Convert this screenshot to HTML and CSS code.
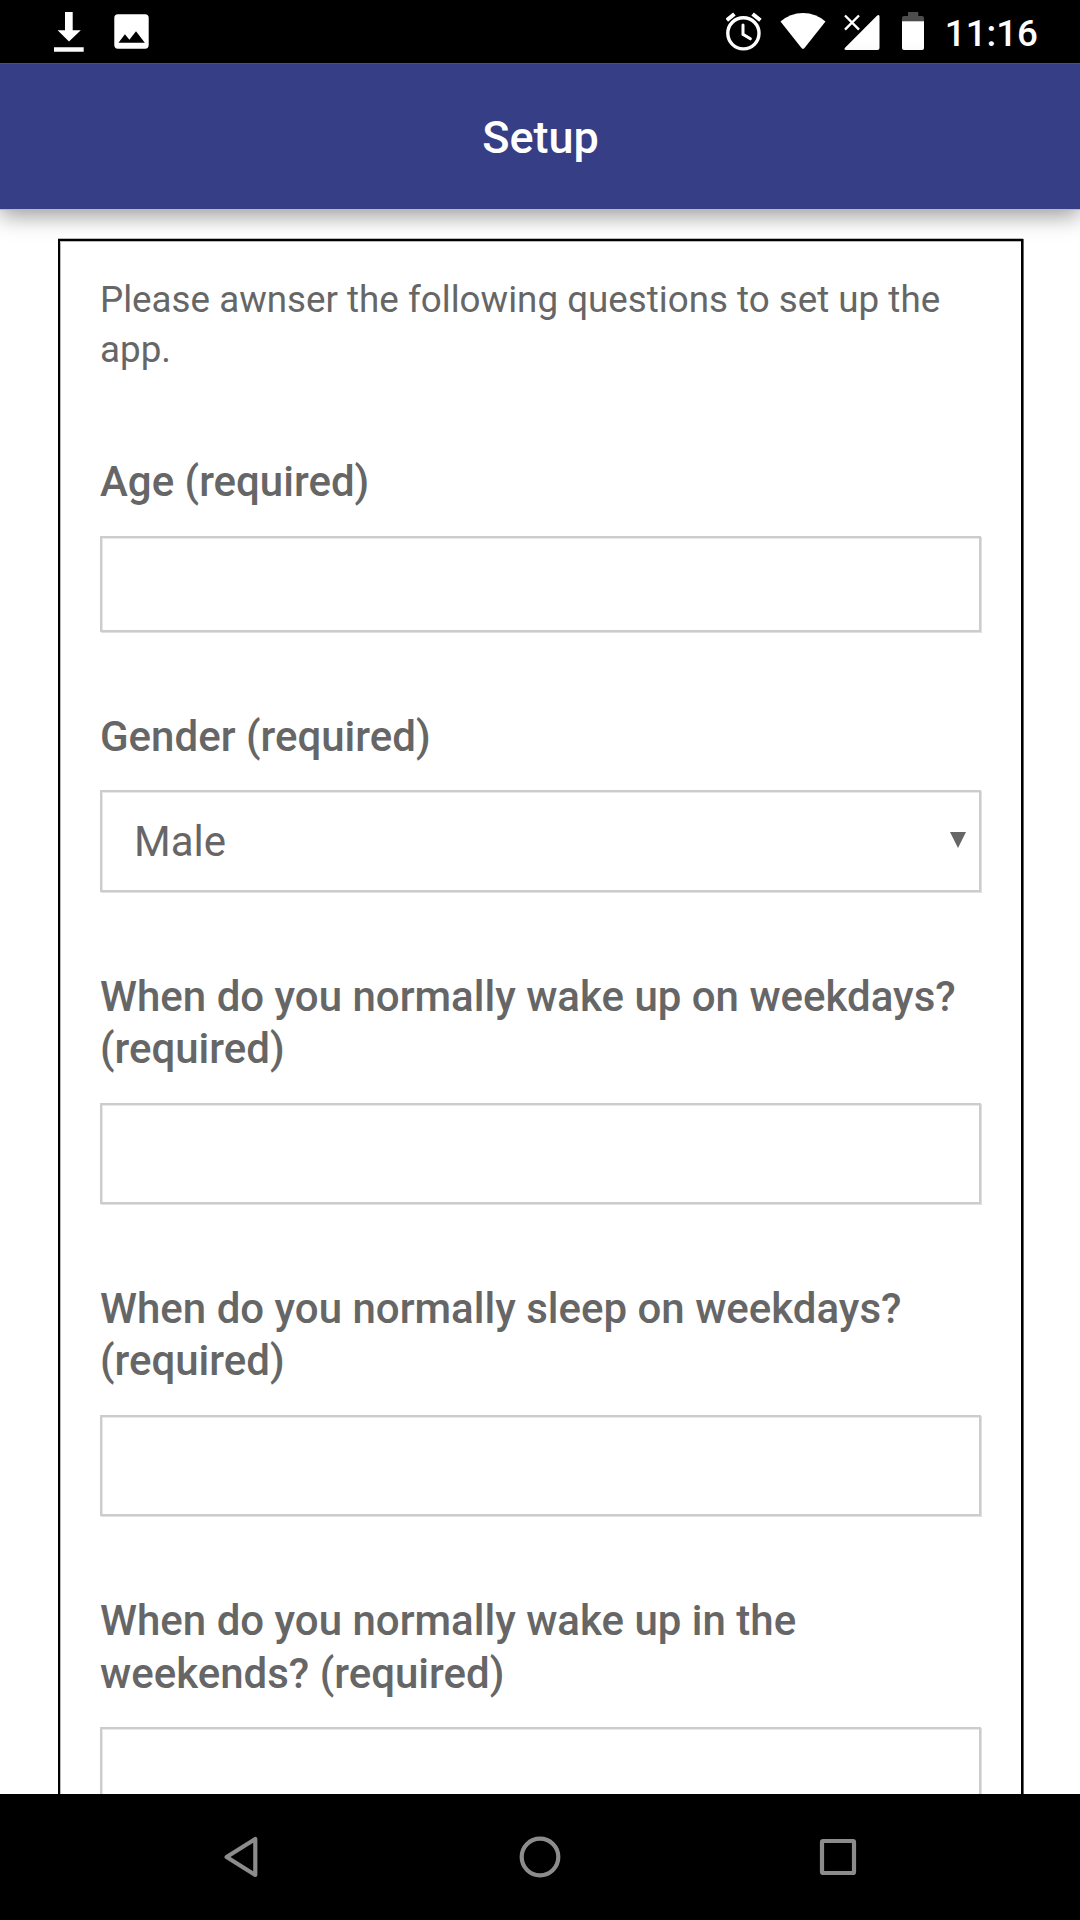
FILE: index.html
```html
<!DOCTYPE html>
<html lang="en">
<head>
<meta charset="utf-8">
<title>Setup</title>
<link rel="stylesheet" href="styles.css">
</head>
<body>
<div class="screen">
  <div class="status-bar">
    <div class="status-group">
      <svg class="icon" width="30" height="63" viewBox="54 0 30 63"><path d="M65 12h7.7v18.2h8.1L69 41.4 57.6 30.2H65zM54 47.3h29.7v4.4H54z"/></svg>
      <svg class="icon" width="35" height="63" viewBox="114 0 35 63"><path fill-rule="evenodd" d="M117.9 14.3h27.2a3.6 3.6 0 0 1 3.6 3.6v27.2a3.6 3.6 0 0 1-3.6 3.6h-27.2a3.6 3.6 0 0 1-3.6-3.6V17.900a3.600 3.600 0 0 1 3.600-3.600zM118.500 42.700h26.300L136 31.200l-6.600 8.500-4.500-5.500z"/></svg>
    </div>
    <div class="status-group status-system">
      <svg class="icon" width="36" height="63" viewBox="726 0 36 63"><g fill="none" stroke="#fff" stroke-linecap="round"><circle cx="743.4" cy="33.300" r="15.600" stroke-width="3.400"/><path stroke-width="3" d="M743 25v9.300l7.400 4.500"/><path stroke-width="4" stroke-linecap="butt" d="M726.800 20.300l7.600-6.300M752.600 14l7.800 6.300"/></g></svg>
      <svg class="icon" width="46" height="63" viewBox="780 0 46 63"><path d="M780.500 21.600Q790 13 803 13t22.500 8.600L804.300 48.200q-1.300 1.300-2.600 0z"/></svg>
      <svg class="icon" width="36" height="63" viewBox="843.500 0 36 63"><path d="M876.700 15.600q2.300-1.800 2.300 1V48q0 2-2 2H845.500q-2.500-.2-1-2.300z"/><path class="knockout" d="M844.500 15.500l14 14.200m0-14.200l-14 14.200"/><path fill="none" stroke="#fff" stroke-width="2.400" d="M844.500 15.500l14 14.200m0-14.200l-14 14.200"/></svg>
      <svg class="icon" width="22" height="63" viewBox="902 0 22 63"><path fill="#4d4d4d" d="M908 12h10.300v4H922q2 0 2 2v3.500h-22V18q0-2 2-2h4z"/><path d="M902 21.300h22V48q0 2-2 2h-18q-2 0-2-2z"/></svg>
      <span class="clock">11:16</span>
    </div>
  </div>
  <header class="app-bar"><h1 class="app-title">Setup</h1></header>
  <main class="content">
    <form class="panel">
      <p class="intro">Please awnser the following questions to set up the app.</p>
      <div class="field">
        <label class="label" for="age">Age (required)</label>
        <input class="control control-number" id="age" type="text">
      </div>
      <div class="field">
        <label class="label" for="gender">Gender (required)</label>
        <div class="select-wrap">
          <select class="control select" id="gender"><option>Male</option><option>Female</option></select>
          <svg class="arrow" width="16" height="16" viewBox="0 0 16 16"><path d="M0 0h16L8 16z"/></svg>
        </div>
      </div>
      <div class="field">
        <label class="label" for="wake">When do you normally wake up on weekdays? (required)</label>
        <input class="control" id="wake" type="text">
      </div>
      <div class="field">
        <label class="label" for="sleep">When do you normally sleep on weekdays? (required)</label>
        <input class="control" id="sleep" type="text">
      </div>
      <div class="field">
        <label class="label" for="weekend">When do you normally wake up in the weekends? (required)</label>
        <input class="control" id="weekend" type="text">
      </div>
    </form>
  </main>
  <nav class="nav-bar">
    <svg class="nav-icon" width="44" height="44" viewBox="0 0 44 44"><path d="M6.600 22L35.300 4v36z"/></svg>
    <svg class="nav-icon" width="44" height="44" viewBox="0 0 44 44"><circle cx="22" cy="22" r="18.300"/></svg>
    <svg class="nav-icon" width="44" height="44" viewBox="0 0 44 44"><rect x="6" y="6" width="32" height="32" rx="1"/></svg>
  </nav>
</div>
</body>
</html>
```
FILE: styles.css
```css
* {
  box-sizing: border-box;
}

body {
  margin: 0;
  background: #fff;
  font-family: Roboto, "Liberation Sans", sans-serif;
  color: #666;
}

.screen {
  display: flex;
  flex-direction: column;
  height: 1920px;
  overflow: hidden;
}

.status-bar {
  display: flex;
  justify-content: space-between;
  flex: none;
  height: 63px;
  padding: 0 42px 0 54px;
  background: #000;
  color: #fff;
}

.status-group {
  display: flex;
  gap: 30px;
}

.status-system {
  gap: 18px;
}

.icon {
  display: block;
  flex: none;
  fill: #fff;
}

.knockout {
  fill: none;
  stroke: #000;
  stroke-width: 5;
}

.clock {
  margin-left: 3px;
  font-size: 36.75px;
  font-weight: 500;
  line-height: 67px;
}

.status-system .icon:nth-child(4) {
  margin-left: 4px;
}

.app-bar {
  display: flex;
  align-items: center;
  justify-content: center;
  flex: none;
  z-index: 1;
  height: 146px;
  padding: 3px 0 0 1px;
  background: #363e85;
  border-top: 1px solid #464d8b;
  box-shadow: 0 1px 0 #b9b8d0, 0 6px 22px rgba(0, 0, 0, .42);
}

.app-title {
  margin: 0;
  font-size: 45px;
  font-weight: 500;
  line-height: 54px;
  color: #fff;
}

.content {
  flex: 1;
  min-height: 0;
  padding: 30px 57px 0 58px;
  overflow: hidden;
}

.panel {
  display: flex;
  flex-direction: column;
  gap: 78.4px;
  height: 1900px;
  padding: 33.5px 40px 0;
  border: 2px solid #000;
  box-shadow: inset 1px 1px 0 #bbb, 1px 0 0 #666, 0 -1px 0 #bbb;
}

.intro {
  margin: 0 0 2.9px;
  font-size: 36.75px;
  line-height: 50px;
}

.field {
  display: flex;
  flex-direction: column;
  gap: 27px;
}

.label {
  padding-top: .3px;
  font-size: 42px;
  font-weight: 500;
  line-height: 52.5px;
}

.control {
  width: 100%;
  height: 101.6px;
  padding: 0 32px;
  border: 2px solid #ccc;
  border-radius: 0;
  background: #fff;
  box-shadow: 1px 1px 0 #e0e0e0, inset 1px 1px 0 #e8e8e8;
  font: 400 42px Roboto, "Liberation Sans", sans-serif;
  color: #666;
}

.control-number {
  height: 96.5px;
}

.select-wrap {
  position: relative;
}

.select {
  display: block;
  appearance: none;
}

.arrow {
  position: absolute;
  top: 41.7px;
  right: 15px;
  fill: #666;
}

.nav-bar {
  display: flex;
  justify-content: center;
  align-items: center;
  gap: 254px;
  flex: none;
  height: 126px;
  background: #000;
}

.nav-icon {
  display: block;
  fill: none;
  stroke: #8c8c8c;
  stroke-width: 4.2;
  stroke-linejoin: round;
}
```
